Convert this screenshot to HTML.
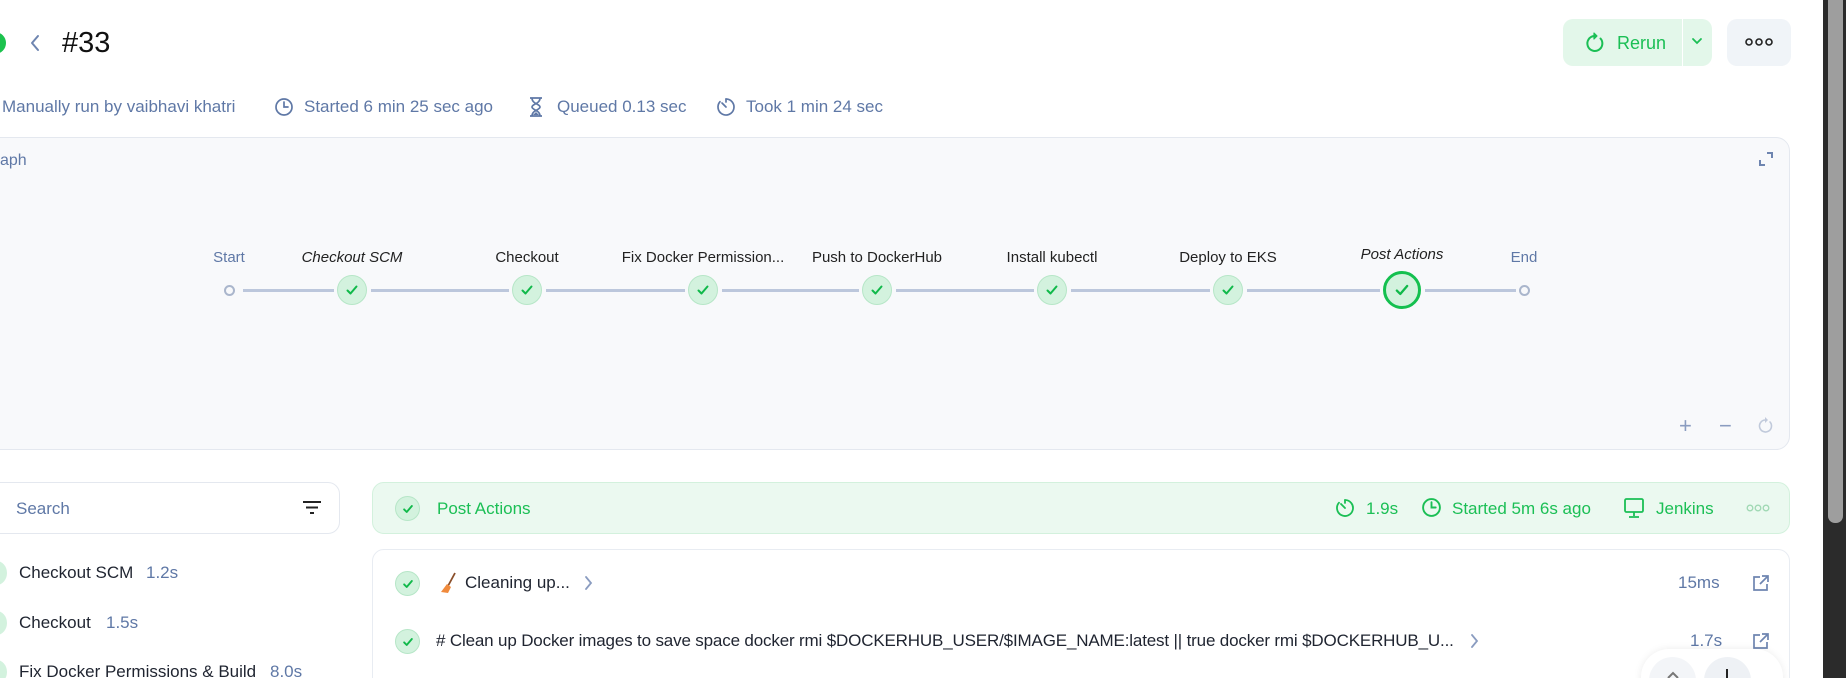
<!DOCTYPE html>
<html><head><meta charset="utf-8"><style>
*{box-sizing:border-box;margin:0;padding:0}
html{width:1846px;height:678px;overflow:hidden}
body{width:1846px;height:678px;overflow:hidden;background:#fff;font-family:"Liberation Sans",sans-serif;position:relative;color:#1f2430}
.a{position:absolute;white-space:nowrap}
.meta{font-size:17px;color:#5f78a6;top:97px}
.lbl{font-size:15px;color:#222;top:249px;transform:translateX(-50%)}
.node{position:absolute;width:30px;height:30px;border-radius:50%;background:#d3f2de;border:1.5px solid #b6e6c7;top:275px;transform:translateX(-50%);display:flex;align-items:center;justify-content:center}
.line{position:absolute;height:3px;background:#bcc7dc;top:289px}
.ck{position:absolute;width:25px;height:25px;border-radius:50%;background:#d3f2de;border:1.5px solid #b6e6c7;display:flex;align-items:center;justify-content:center}
.g{color:#1bbf55}
</style></head><body>
<div class="a" style="left:-16px;top:32px;width:22px;height:22px;border-radius:50%;background:#1cc24e"></div>
<svg class="a" style="left:28px;top:33px" width="14" height="20" viewBox="0 0 14 20"><path d="M10 3L4 10l6 7" fill="none" stroke="#6e85b0" stroke-width="2" stroke-linecap="round" stroke-linejoin="round"/></svg>
<div class="a" style="left:62px;top:27px;font-size:29px;color:#111">#33</div>

<div class="a" style="left:1563px;top:19px;width:119px;height:47px;background:#e3f7ea;border-radius:10px 0 0 10px"></div>
<div class="a" style="left:1683px;top:19px;width:29px;height:47px;background:#e3f7ea;border-radius:0 10px 10px 0"></div>
<svg class="a" style="left:1584px;top:32px" width="22" height="22" viewBox="0 0 22 22"><path d="M16.5 6.5A7.5 7.5 0 1 1 10 4" fill="none" stroke="#1bbf55" stroke-width="2" stroke-linecap="round"/><path d="M10 1v6l3-3z" fill="#1bbf55" stroke="#1bbf55" stroke-width="1.2" stroke-linejoin="round"/></svg>
<div class="a g" style="left:1617px;top:33px;font-size:18px">Rerun</div>
<svg class="a" style="left:1690px;top:36px" width="14" height="10" viewBox="0 0 14 10"><path d="M3 3l4 4 4-4" fill="none" stroke="#1bbf55" stroke-width="1.8" stroke-linecap="round"/></svg>
<div class="a" style="left:1727px;top:19px;width:64px;height:47px;background:#f0f4f8;border-radius:10px"></div>
<svg class="a" style="left:1745px;top:36px" width="28" height="12" viewBox="0 0 28 12"><g fill="none" stroke="#222" stroke-width="1.6"><circle cx="4" cy="6" r="3"/><circle cx="14" cy="6" r="3"/><circle cx="24" cy="6" r="3"/></g></svg>

<div class="a meta" style="left:2px">Manually run by vaibhavi khatri</div>
<svg class="a" style="left:274px;top:97px" width="20" height="20" viewBox="0 0 20 20"><circle cx="10" cy="10" r="8" fill="none" stroke="#5f78a6" stroke-width="1.7"/><path d="M10 5v5h4" fill="none" stroke="#5f78a6" stroke-width="1.7" stroke-linecap="round"/></svg>
<div class="a meta" style="left:304px">Started 6 min 25 sec ago</div>
<svg class="a" style="left:527px;top:96px" width="18" height="22" viewBox="0 0 18 22"><path d="M3 2h12M3 20h12M5 2c0 6 8 6 8 9s-8 3-8 9M13 2c0 6-8 6-8 9s8 3 8 9" fill="none" stroke="#5f78a6" stroke-width="1.7"/><path d="M6 19l3-3 3 3z" fill="#5f78a6"/></svg>
<div class="a meta" style="left:557px">Queued 0.13 sec</div>
<svg class="a" style="left:715px;top:96px" width="22" height="22" viewBox="0 0 22 22"><path d="M11 3a8 8 0 1 1-6 2.7" fill="none" stroke="#5f78a6" stroke-width="1.7" stroke-linecap="round"/><path d="M11 3v3M7 7l4 4" fill="none" stroke="#5f78a6" stroke-width="1.7" stroke-linecap="round"/></svg>
<div class="a meta" style="left:746px">Took 1 min 24 sec</div>

<div class="a" style="left:-20px;top:137px;width:1810px;height:313px;background:#f8f9fb;border:1.5px solid #e4e8ef;border-radius:14px"></div>
<div class="a" style="left:0;top:152px;font-size:16px;color:#5f78a6">aph</div>
<svg class="a" style="left:1758px;top:151px" width="16" height="16" viewBox="0 0 16 16"><path d="M9 2h5v5M7 14H2V9" fill="none" stroke="#6e85b0" stroke-width="2"/></svg>

<div class="a lbl" style="left:229px;color:#5f78a6">Start</div>
<div class="a lbl" style="left:352px;font-style:italic">Checkout SCM</div>
<div class="a lbl" style="left:527px">Checkout</div>
<div class="a lbl" style="left:703px">Fix Docker Permission...</div>
<div class="a lbl" style="left:877px">Push to DockerHub</div>
<div class="a lbl" style="left:1052px">Install kubectl</div>
<div class="a lbl" style="left:1228px">Deploy to EKS</div>
<div class="a lbl" style="left:1402px;top:246px;font-style:italic">Post Actions</div>
<div class="a lbl" style="left:1524px;color:#5f78a6">End</div>

<div class="a" style="left:224px;top:285px;width:11px;height:11px;border-radius:50%;border:2px solid #aab6cc;background:#f8f9fb"></div>
<div class="line" style="left:243px;width:91px"></div>
<div class="line" style="left:371px;width:138px"></div>
<div class="line" style="left:546px;width:139px"></div>
<div class="line" style="left:722px;width:137px"></div>
<div class="line" style="left:896px;width:138px"></div>
<div class="line" style="left:1071px;width:139px"></div>
<div class="line" style="left:1247px;width:133px"></div>
<div class="line" style="left:1425px;width:91px"></div>
<div class="a" style="left:1519px;top:285px;width:11px;height:11px;border-radius:50%;border:2px solid #aab6cc;background:#f8f9fb"></div>

<div class="node" style="left:352px"><svg width="14" height="14" viewBox="0 0 14 14"><path d="M2.5 7.5l3 3 6-7" fill="none" stroke="#10b94a" stroke-width="2" stroke-linecap="round" stroke-linejoin="round"/></svg></div>
<div class="node" style="left:527px"><svg width="14" height="14" viewBox="0 0 14 14"><path d="M2.5 7.5l3 3 6-7" fill="none" stroke="#10b94a" stroke-width="2" stroke-linecap="round" stroke-linejoin="round"/></svg></div>
<div class="node" style="left:703px"><svg width="14" height="14" viewBox="0 0 14 14"><path d="M2.5 7.5l3 3 6-7" fill="none" stroke="#10b94a" stroke-width="2" stroke-linecap="round" stroke-linejoin="round"/></svg></div>
<div class="node" style="left:877px"><svg width="14" height="14" viewBox="0 0 14 14"><path d="M2.5 7.5l3 3 6-7" fill="none" stroke="#10b94a" stroke-width="2" stroke-linecap="round" stroke-linejoin="round"/></svg></div>
<div class="node" style="left:1052px"><svg width="14" height="14" viewBox="0 0 14 14"><path d="M2.5 7.5l3 3 6-7" fill="none" stroke="#10b94a" stroke-width="2" stroke-linecap="round" stroke-linejoin="round"/></svg></div>
<div class="node" style="left:1228px"><svg width="14" height="14" viewBox="0 0 14 14"><path d="M2.5 7.5l3 3 6-7" fill="none" stroke="#10b94a" stroke-width="2" stroke-linecap="round" stroke-linejoin="round"/></svg></div>
<div class="node" style="left:1402px;width:38px;height:38px;top:271px;border:3px solid #14c04f"><svg width="16" height="16" viewBox="0 0 14 14"><path d="M2.5 7.5l3 3 6-7" fill="none" stroke="#10b94a" stroke-width="2" stroke-linecap="round" stroke-linejoin="round"/></svg></div>

<div class="a" style="left:1679px;top:413px;font-size:22px;color:#8a9cc0">+</div>
<div class="a" style="left:1719px;top:413px;font-size:22px;color:#8a9cc0">−</div>
<svg class="a" style="left:1758px;top:416px" width="16" height="18" viewBox="0 0 16 18"><path d="M12 6A6 6 0 1 1 7 4" fill="none" stroke="#c1cadb" stroke-width="1.6" stroke-linecap="round"/><path d="M7 1v6l3-3z" fill="#c1cadb"/></svg>

<div class="a" style="left:-20px;top:482px;width:360px;height:52px;border:1.5px solid #e4e8ef;border-radius:12px;background:#fff"></div>
<div class="a" style="left:16px;top:499px;font-size:17px;color:#5f78a6">Search</div>
<svg class="a" style="left:302px;top:500px" width="20" height="16" viewBox="0 0 20 16"><path d="M1 2h18M4 7.5h12M8 13h4" stroke="#222" stroke-width="2"/></svg>

<div class="a" style="left:-14px;top:561px;width:21px;height:24px;border-radius:50%;background:#d3f2de"></div>
<div class="a" style="left:19px;top:563px;font-size:17px;color:#1f2430">Checkout SCM</div>
<div class="a" style="left:146px;top:563px;font-size:17px;color:#5f78a6">1.2s</div>
<div class="a" style="left:-14px;top:611px;width:21px;height:24px;border-radius:50%;background:#d3f2de"></div>
<div class="a" style="left:19px;top:613px;font-size:17px;color:#1f2430">Checkout</div>
<div class="a" style="left:106px;top:613px;font-size:17px;color:#5f78a6">1.5s</div>
<div class="a" style="left:-14px;top:660px;width:21px;height:24px;border-radius:50%;background:#d3f2de"></div>
<div class="a" style="left:19px;top:662px;font-size:17px;color:#1f2430">Fix Docker Permissions &amp; Build</div>
<div class="a" style="left:270px;top:662px;font-size:17px;color:#5f78a6">8.0s</div>

<div class="a" style="left:372px;top:482px;width:1418px;height:52px;background:#ebf9f0;border:1.5px solid #d3f1dd;border-radius:12px"></div>
<div class="ck" style="left:395px;top:496px"><svg width="12" height="12" viewBox="0 0 14 14"><path d="M2.5 7.5l3 3 6-7" fill="none" stroke="#10b94a" stroke-width="2.2" stroke-linecap="round" stroke-linejoin="round"/></svg></div>
<div class="a g" style="left:437px;top:499px;font-size:17px">Post Actions</div>
<svg class="a" style="left:1334px;top:497px" width="22" height="22" viewBox="0 0 22 22"><path d="M11 3a8 8 0 1 1-6 2.7" fill="none" stroke="#1bbf55" stroke-width="1.8" stroke-linecap="round"/><path d="M11 3v3M7 7l4 4" fill="none" stroke="#1bbf55" stroke-width="1.8" stroke-linecap="round"/></svg>
<div class="a g" style="left:1366px;top:499px;font-size:17px">1.9s</div>
<svg class="a" style="left:1421px;top:497px" width="21" height="21" viewBox="0 0 20 20"><circle cx="10" cy="10" r="8" fill="none" stroke="#1bbf55" stroke-width="1.8"/><path d="M10 5v5h4" fill="none" stroke="#1bbf55" stroke-width="1.8" stroke-linecap="round"/></svg>
<div class="a g" style="left:1452px;top:499px;font-size:17px">Started 5m 6s ago</div>
<svg class="a" style="left:1623px;top:497px" width="22" height="22" viewBox="0 0 22 22"><rect x="2" y="2" width="18" height="13" rx="1.5" fill="none" stroke="#1bbf55" stroke-width="1.8"/><path d="M11 15v4M6 20h10" stroke="#1bbf55" stroke-width="1.8"/></svg>
<div class="a g" style="left:1656px;top:499px;font-size:17px">Jenkins</div>
<svg class="a" style="left:1746px;top:503px" width="24" height="10" viewBox="0 0 24 10"><g fill="none" stroke="#9fd8b3" stroke-width="1.3"><circle cx="4" cy="5" r="2.8"/><circle cx="12" cy="5" r="2.8"/><circle cx="20" cy="5" r="2.8"/></g></svg>

<div class="a" style="left:372px;top:549px;width:1418px;height:160px;border:1.5px solid #e8ecf2;border-radius:12px;background:#fff"></div>
<div class="ck" style="left:395px;top:571px"><svg width="12" height="12" viewBox="0 0 14 14"><path d="M2.5 7.5l3 3 6-7" fill="none" stroke="#10b94a" stroke-width="2.2" stroke-linecap="round" stroke-linejoin="round"/></svg></div>
<svg class="a" style="left:439px;top:572px" width="20" height="22" viewBox="0 0 20 22"><path d="M16 1L9 14" stroke="#8a4f2a" stroke-width="1.8"/><path d="M8 12l4 3-3 6-7-1z" fill="#f08a3c"/></svg>
<div class="a" style="left:465px;top:573px;font-size:17px">Cleaning up...</div>
<svg class="a" style="left:584px;top:575px" width="10" height="16" viewBox="0 0 10 16"><path d="M2 2l5 6-5 6" fill="none" stroke="#8a9cc0" stroke-width="1.8" stroke-linecap="round"/></svg>
<div class="a" style="left:1678px;top:573px;font-size:17px;color:#5f78a6">15ms</div>
<svg class="a" style="left:1752px;top:574px" width="18" height="18" viewBox="0 0 18 18"><path d="M8 3H2v13h13v-6M10 2h6v6M16 2L8 10" fill="none" stroke="#6e85b0" stroke-width="1.7"/></svg>

<div class="ck" style="left:395px;top:629px"><svg width="12" height="12" viewBox="0 0 14 14"><path d="M2.5 7.5l3 3 6-7" fill="none" stroke="#10b94a" stroke-width="2.2" stroke-linecap="round" stroke-linejoin="round"/></svg></div>
<div class="a" style="left:436px;top:631px;font-size:17px;letter-spacing:-0.16px">#&nbsp;Clean up Docker images to save space docker rmi $DOCKERHUB_USER/$IMAGE_NAME:latest || true docker rmi $DOCKERHUB_U...</div>
<svg class="a" style="left:1470px;top:633px" width="10" height="16" viewBox="0 0 10 16"><path d="M2 2l5 6-5 6" fill="none" stroke="#8a9cc0" stroke-width="1.8" stroke-linecap="round"/></svg>
<div class="a" style="left:1690px;top:631px;font-size:17px;color:#5f78a6">1.7s</div>
<svg class="a" style="left:1752px;top:632px" width="18" height="18" viewBox="0 0 18 18"><path d="M8 3H2v13h13v-6M10 2h6v6M16 2L8 10" fill="none" stroke="#6e85b0" stroke-width="1.7"/></svg>

<div class="a" style="left:1641px;top:649px;width:142px;height:60px;border-radius:28px;background:#fff;box-shadow:0 0 8px rgba(0,0,0,.08)"></div>
<div class="a" style="left:1649px;top:657px;width:47px;height:47px;border-radius:50%;background:#f3f5f8"></div>
<div class="a" style="left:1704px;top:657px;width:47px;height:47px;border-radius:50%;background:#eef1f5"></div>
<svg class="a" style="left:1665px;top:670px" width="16" height="10" viewBox="0 0 16 10"><path d="M3 8l5-5 5 5" fill="none" stroke="#777" stroke-width="2"/></svg>
<div class="a" style="left:1726px;top:669px;width:2px;height:12px;background:#222"></div>

<div class="a" style="left:1823px;top:0;width:23px;height:678px;background:#2b2b2b"></div>
<div class="a" style="left:1828px;top:0;width:15px;height:523px;background:#9e9e9e;border-radius:0 0 7px 7px"></div>
</body></html>
